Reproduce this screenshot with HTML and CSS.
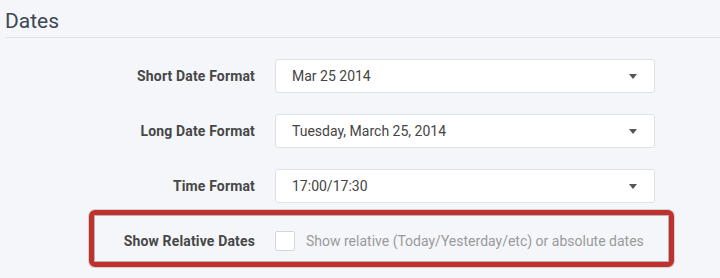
FILE: index.html
```html
<!DOCTYPE html>
<html lang="en">
<head>
  <meta charset="UTF-8" />
  <title>Dates</title>
  <link rel="stylesheet" href="styles.css">
</head>
<body>

<h2 class="section-title">Dates</h2>

<div class="form">
  <div class="row">
    <label class="label">Short Date Format</label>
    <div class="select">
      <span>Mar 25 2014</span>
      <span class="caret"></span>
    </div>
  </div>

  <div class="row">
    <label class="label">Long Date Format</label>
    <div class="select">
      <span>Tuesday, March 25, 2014</span>
      <span class="caret"></span>
    </div>
  </div>

  <div class="row">
    <label class="label">Time Format</label>
    <div class="select">
      <span>17:00/17:30</span>
      <span class="caret"></span>
    </div>
  </div>

  <div class="row row-check">
    <div class="highlight"></div>
    <label class="label">Show Relative Dates</label>
    <div class="check">
      <span class="box"></span>
      <span class="check-text">Show relative (Today/Yesterday/etc) or absolute dates</span>
    </div>
  </div>
</div>

</body>
</html>
```

FILE: styles.css
```css
body {
  margin: 0;
  background-color: #f4f6fa;
  font-family: Roboto, "Liberation Sans", sans-serif;
  color: #444;
}
.section-title {
  margin: 0 0 0 5px;
  padding: 10px 0 5px;
  font-size: 21px;
  font-weight: normal;
  line-height: 22px;
  color: #3e4656;
  border-bottom: 1px solid #dfe3e8;
}
.form {
  padding-top: 21px;
}
.row {
  display: flex;
  align-items: center;
  height: 34px;
  margin-bottom: 21px;
  position: relative;
}
.label {
  width: 255px;
  text-align: right;
  font-size: 14px;
  font-weight: bold;
  letter-spacing: 0.15px;
  color: #474747;
}
.select {
  margin-left: 20px;
  width: 346px;
  height: 32px;
  border: 1px solid #dde2e7;
  border-radius: 3px;
  background: #fff;
  display: flex;
  align-items: center;
  justify-content: space-between;
  padding: 0 16px;
  font-size: 14px;
  color: #454545;
}
.caret {
  width: 0;
  height: 0;
  border-left: 4.5px solid transparent;
  border-right: 4.5px solid transparent;
  border-top: 5px solid #555;
  margin-right: 1px;
}
.check {
  margin-left: 20px;
  display: flex;
  align-items: center;
}
.box {
  width: 18px;
  height: 18px;
  border: 1px solid #d3d6da;
  border-radius: 2px;
  background: #fff;
}
.check-text {
  margin-left: 11px;
  font-size: 14px;
  color: #9a9a9a;
}
/* annotation frame round the relative dates row */
.highlight {
  position: absolute;
  left: 89px;
  top: -14px;
  bottom: -9px;
  width: 575px;
  border: 5px solid #c1312c;
  border-radius: 6px;
  box-shadow: inset 0 0 0 1px rgba(70, 60, 60, 0.35), 0 0 0 1px rgba(70, 60, 60, 0.2);
}
```
